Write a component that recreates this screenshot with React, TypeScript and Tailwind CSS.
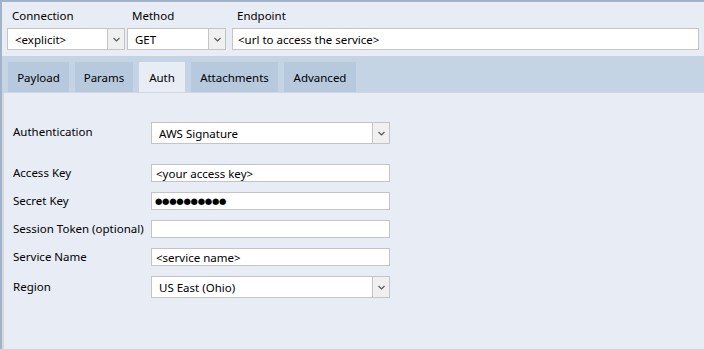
import React from 'react';

const font = { fontFamily: '"Noto Sans", "Open Sans", sans-serif' };

function Chevron() {
  return (
    <svg width="7" height="5" viewBox="0 0 7 5" className="text-[#555]">
      <path d="M0.5 1 L3.5 4 L6.5 1" fill="none" stroke="currentColor" strokeWidth="1.1" />
    </svg>
  );
}

function Select({ value, className }: { value: string; className: string }) {
  return (
    <div className={`flex h-[22px] border border-[#c4c4c4] bg-white ${className}`}>
      <div className="flex-1 pl-[7px] pt-[1px] leading-[20px] text-black">{value}</div>
      <div className="flex w-[17px] items-center justify-center border-l border-[#c4c4c4] bg-[#f0f0f0]">
        <Chevron />
      </div>
    </div>
  );
}

function TextBox({ value, className }: { value?: string; className: string }) {
  return (
    <div className={`h-[18px] border border-[#c4c4c4] bg-white pl-[4px] leading-[17px] text-black ${className}`}>
      {value}
    </div>
  );
}

const tabs = [
  { name: 'Payload', w: 'w-[61px]' },
  { name: 'Params', w: 'w-[58px]' },
  { name: 'Auth', w: 'w-[46px]' },
  { name: 'Attachments', w: 'w-[87px]' },
  { name: 'Advanced', w: 'w-[72px]' },
];

export default function App() {
  return (
    <div
      style={font}
      className="flex h-[349px] w-[704px] flex-col overflow-hidden border-l-2 border-t-2 border-[#a1b2c9] bg-[#e8ecf4] text-[11.5px] text-black"
    >
      {/* endpoint bar */}
      <div className="flex items-start gap-[2px] pl-[5px] pt-[6px]">
        <div className="flex w-[118px] flex-col">
          <div className="mb-[4px] pl-[5px] leading-[16px]">Connection</div>
          <Select value="<explicit>" className="w-[118px]" />
        </div>
        <div className="flex w-[99px] flex-col">
          <div className="mb-[4px] pl-[5px] leading-[16px]">Method</div>
          <Select value="GET" className="w-[99px]" />
        </div>
        <div className="ml-[4px] flex w-[467px] flex-col">
          <div className="mb-[4px] pl-[5px] leading-[16px]">Endpoint</div>
          <div className="h-[22px] border border-[#c4c4c4] bg-white pl-[5px] pt-[1px] leading-[20px]">
            &lt;url to access the service&gt;
          </div>
        </div>
      </div>

      {/* tabs */}
      <div className="mt-[6px] flex h-[36px] items-end gap-[6px] bg-[#c4d4e4] pl-[6px]">
        {tabs.map((t) => (
          <div
            key={t.name}
            className={`flex h-[30px] items-center justify-center pt-[2px] ${t.w} ${
              t.name === 'Auth' ? 'bg-[#e8ecf4]' : 'bg-[#b6c9dd]'
            }`}
          >
            {t.name}
          </div>
        ))}
      </div>

      {/* auth panel */}
      <div className="flex-1 border-l-2 border-t border-[#d2d6de] pl-[9px] pt-[29px]">
        <div className="flex h-[22px] items-start">
          <div className="w-[138px] pt-[2px] leading-[16px]">Authentication</div>
          <Select value="AWS Signature" className="w-[239px]" />
        </div>
        <div className="mt-[20px] flex flex-col">
          {[
            { label: 'Access Key', value: '<your access key>' },
            { label: 'Secret Key', secret: true },
            { label: 'Session Token (optional)' },
            { label: 'Service Name', value: '<service name>' },
          ].map((r) => (
            <div key={r.label} className="flex h-[28px] items-start">
              <div className="w-[138px] pt-[1px] leading-[16px] whitespace-nowrap">{r.label}</div>
              {r.secret ? (
                <div className="h-[18px] w-[239px] border border-[#c4c4c4] bg-white pl-[3px] font-['DejaVu_Sans'] text-[8.5px] leading-[16px] tracking-[-0.3px]">
                  ●●●●●●●●●●
                </div>
              ) : (
                <TextBox value={r.value} className="w-[239px]" />
              )}
            </div>
          ))}
          <div className="flex h-[22px] items-start">
            <div className="w-[138px] pt-[3px] leading-[16px]">Region</div>
            <Select value="US East (Ohio)" className="w-[239px]" />
          </div>
        </div>
      </div>
    </div>
  );
}
